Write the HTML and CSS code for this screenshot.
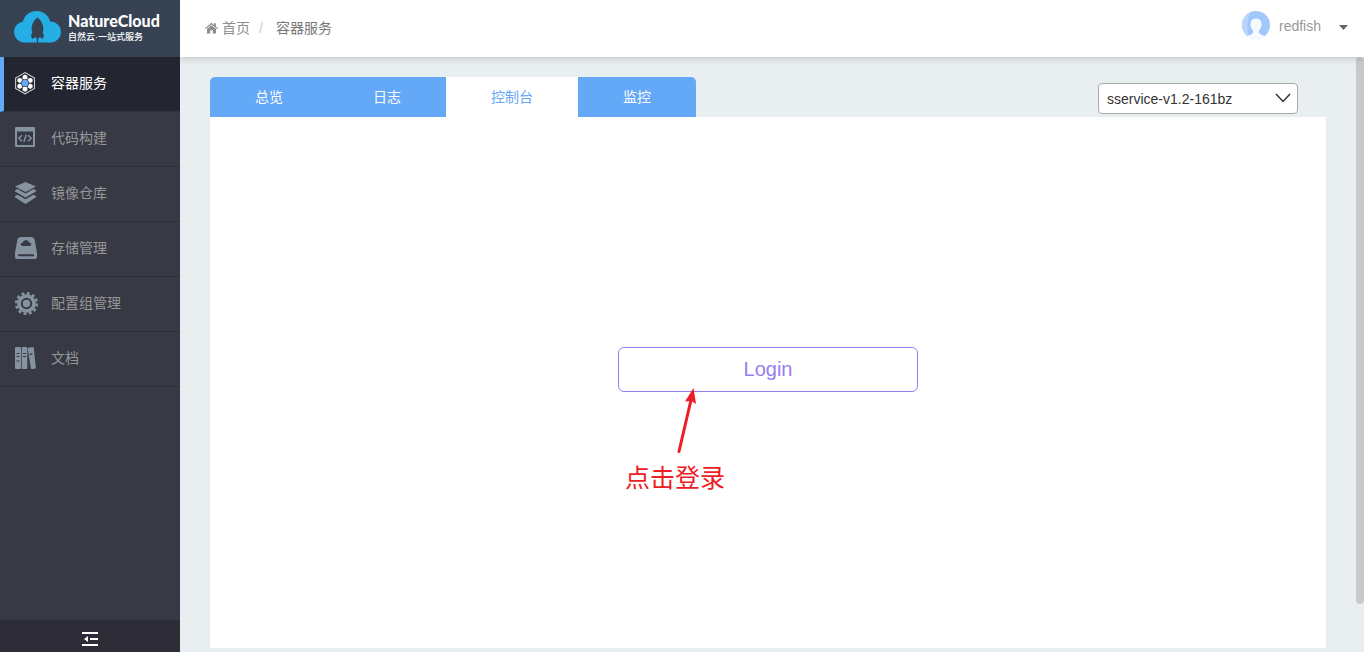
FILE: index.html
```html
<!DOCTYPE html>
<html lang="zh-CN">
<head>
<meta charset="utf-8">
<meta name="viewport" content="width=device-width, initial-scale=1">
<title>NatureCloud - 容器服务</title>
<link rel="stylesheet" href="styles.css">
</head>
<body>
<div class="app">
  <aside class="sidebar">
    <a class="brand" href="#">
      <svg class="brand-mark" width="48" height="32" viewBox="0 0 48 32" aria-hidden="true">
        <g fill="#25aee6">
          <circle cx="22.500" cy="14" r="14"/>
          <circle cx="10.500" cy="21" r="10.500"/>
          <circle cx="36.500" cy="21" r="10.500"/>
          <path d="M10.500 14h26v17.500h-26z"/>
        </g>
        <path fill="#364252" d="M23.500 6.500C28.500 10.500 30.500 16 28.800 21.500L30 24.500 28.800 28 25.800 26.300 24.400 27 24 32H23L22.600 27 21.200 26.300 18.200 28 17 24.500 18.200 21.500C16.500 16 18.500 10.500 23.500 6.500Z"/>
      </svg>
      <span class="brand-text">
        <span class="brand-name">NatureCloud</span>
        <span class="brand-sub">自然云·一站式服务</span>
      </span>
    </a>
    <nav class="menu">
      <a class="menu-item is-active" href="#">
        <svg class="icon" width="24" height="24" viewBox="0 0 24 24" aria-hidden="true">
          <path fill="none" stroke="#c9ccd2" stroke-width="1.100" d="M10 1.600 19.500 7v10.400L10 22.800.6 17.400V7Z"/>
          <g fill="#fff">
            <path d="m10 3.600 2.400 1.300v3L10 9.200 7.600 7.900v-3z"/>
            <path d="m15.200 6.700 2.400 1.300v2.800l-2.400 1.300-2.400-1.300V8z"/>
            <path d="m15.200 12.500 2.400 1.300v2.800l-2.400 1.300-2.400-1.300v-2.800z"/>
            <path d="m10 15.200 2.400 1.300v3L10 20.800l-2.400-1.300v-3z"/>
            <path d="m4.800 12.500 2.400 1.300v2.800l-2.400 1.300-2.400-1.300v-2.800z"/>
            <path d="M4.800 6.700 7.200 8v2.800l-2.400 1.300-2.400-1.300V8z"/>
          </g>
          <circle cx="10" cy="12.200" r="3.900" fill="#232530"/>
          <circle cx="10" cy="12.200" r="3.400" fill="#64a8f8"/>
        </svg>
        <span>容器服务</span>
      </a>
      <a class="menu-item" href="#">
        <svg class="icon" width="24" height="24" viewBox="0 0 24 24" aria-hidden="true">
          <path fill="#8592a0" fill-rule="evenodd" d="M1 1h18q1 0 1 1v18q0 1-1 1H1q-1 0-1-1V2q0-1 1-1Zm1 4.500V19h16V5.500Z"/>
          <path fill="none" stroke="#8592a0" stroke-width="1.500" d="M7 9.300 3.800 12.300 7 15.300M13 9.300l3.200 3-3.200 3M11.300 8.800 8.800 15.800"/>
        </svg>
        <span>代码构建</span>
      </a>
      <a class="menu-item" href="#">
        <svg class="icon" width="24" height="24" viewBox="0 0 24 24" aria-hidden="true">
          <g fill="#8592a0">
            <path d="M10.500 1 21 5.500 10.500 11 0 5.500z"/>
            <path d="m0 9.300 2.500-1.200 8 4.300 8-4.300L21 9.300v1.200L10.500 16.500 0 10.500z"/>
            <path d="m0 15 2.500-1.200 8 4.400 8-4.400L21 15v1.200L10.500 23 0 16.200z"/>
          </g>
        </svg>
        <span>镜像仓库</span>
      </a>
      <a class="menu-item" href="#">
        <svg class="icon" width="24" height="24" viewBox="0 0 24 24" aria-hidden="true">
          <path fill="#8592a0" fill-rule="evenodd" d="M6 1h10q3 0 3.700 3L22 17v4q0 2-2 2H2q-2 0-2-2v-4L2.300 4Q3 1 6 1Zm1.500 9h7q2.300-.3 1.800-2-.5-1.200-2-1.500Q13.300 4 11 4T7.700 6.500Q6 6.800 5.700 8 5.500 9.700 7.500 10ZM4 18.300q-1.200 0-1.200 1t1.200 1h14q1.200 0 1.200-1t-1.200-1Z"/>
        </svg>
        <span>存储管理</span>
      </a>
      <a class="menu-item" href="#">
        <svg class="icon" width="24" height="24" viewBox="0 0 24 24" aria-hidden="true">
          <circle cx="11.500" cy="12.500" r="10.200" fill="none" stroke="#8592a0" stroke-width="2.800" stroke-dasharray="2.900 2.441"/>
          <circle cx="11.500" cy="12.500" r="7.500" fill="none" stroke="#8592a0" stroke-width="3.600"/>
          <circle cx="11.500" cy="12.500" r="3.700" fill="#8592a0"/>
        </svg>
        <span>配置组管理</span>
      </a>
      <a class="menu-item" href="#">
        <svg class="icon" width="24" height="24" viewBox="0 0 24 24" aria-hidden="true">
          <g fill="#8592a0">
            <rect x="0" y="1" width="6" height="22" rx="1"/>
            <rect x="6.700" y="1" width="5.600" height="22" rx="1"/>
            <path d="m13.500 1.800 4.200-.7q.9 0 1.100.8l2 19.800q0 .9-.9 1l-3 .4q-.9 0-1-.9l-3.200-19.400q0-.8.800-1Z"/>
          </g>
          <path stroke="#373945" stroke-width="1.200" d="M1.500 7.500h3M1.500 10.500h3M1.500 15h3M8 7.500h3M8 10.500h3M14.500 8.300l3-.4"/>
        </svg>
        <span>文档</span>
      </a>
    </nav>
    <button class="collapse" type="button" aria-label="收起菜单">
      <svg width="16" height="14" viewBox="0 0 16 14" aria-hidden="true">
        <path fill="#fff" d="M0 0h16v2H0zM8 6h8v2H8zM0 12h16v2H0zM2 7l4-3v6z"/>
      </svg>
    </button>
  </aside>

  <div class="page">
    <header class="topbar">
      <nav class="crumbs">
        <a class="crumb-home" href="#">
          <svg width="13" height="12" viewBox="0 0 13 12" aria-hidden="true">
            <path fill="#8d8d8d" d="M6.500.8 9 2.900V1.200h1.900v3.300L13 6.200l-.8.900L6.500 2.400.8 7.100 0 6.200ZM6.500 3.300 11 7v4.500H7.700V8.300H5.300v3.200H2V7Z"/>
          </svg>
          首页
        </a>
        <span class="crumb-sep">/</span>
        <span class="crumb-current">容器服务</span>
      </nav>
      <button class="user" type="button">
        <svg width="28" height="28" viewBox="0 0 28 28" aria-hidden="true">
          <clipPath id="avatar"><circle cx="14" cy="14" r="14"/></clipPath>
          <g clip-path="url(#avatar)">
            <path fill="#a1c7fb" d="M0 0h28v28H0z"/>
            <path fill="#b9d7fd" d="M0 0h9Q3 10 7 28H0z"/>
            <path fill="#f6faff" d="M14 7.500q5.500 0 5.500 6 0 4-2.500 6v2.500q1 1.500 7 3.500V28H4v-2.500q6-2 7-3.500v-2.500q-2.500-2-2.500-6 0-6 5.500-6Z"/>
          </g>
        </svg>
        <span class="user-name">redfish</span>
        <svg class="user-caret" width="9" height="5" viewBox="0 0 9 5" aria-hidden="true"><path fill="#666" d="M0 0h9L4.500 5z"/></svg>
      </button>
    </header>

    <main class="content">
      <section class="workspace">
        <div class="tools">
          <div class="tabs" role="tablist">
            <button class="tab" type="button" role="tab">总览</button>
            <button class="tab" type="button" role="tab">日志</button>
            <button class="tab is-active" type="button" role="tab" aria-selected="true">控制台</button>
            <button class="tab" type="button" role="tab">监控</button>
          </div>
          <div class="picker">
            <select class="picker-select" aria-label="容器实例">
              <option>sservice-v1.2-161bz</option>
            </select>
            <svg class="picker-arrow" width="16" height="10" viewBox="0 0 16 10" aria-hidden="true"><path fill="none" stroke="#333" stroke-width="1.500" d="m1 1 7 7.500L15 1"/></svg>
          </div>
        </div>
        <div class="panel">
          <div class="login-area">
            <button class="login" type="button">Login</button>
            <div class="hint">
              <svg class="hint-arrow" width="24" height="66" viewBox="0 0 24 66" aria-hidden="true">
                <path fill="none" stroke="#ee1c24" stroke-width="3" stroke-linecap="round" d="M4 63.500 16 12"/>
                <path fill="#ee1c24" d="m18.500 0 2.500 16-4.500-3-6.500.6z"/>
              </svg>
              <span class="hint-text">点击登录</span>
            </div>
          </div>
        </div>
      </section>
      <div class="scroll-track"><div class="scroll-thumb"></div></div>
    </main>
  </div>
</div>
</body>
</html>
```
FILE: styles.css
```css
* {
  box-sizing: border-box;
}

body {
  margin: 0;
  font-family: "Liberation Sans", "Noto Sans CJK SC", sans-serif;
  font-size: 14px;
  line-height: 20px;
  color: #666;
}

a {
  color: inherit;
  text-decoration: none;
}

button,
select {
  font: inherit;
}

button {
  padding: 0;
  border: 0;
  background: none;
  cursor: pointer;
}

svg {
  display: block;
  flex: none;
}

.app {
  display: flex;
  min-height: 100vh;
}

/* Sidebar */
.sidebar {
  position: relative;
  z-index: 2;
  display: flex;
  flex-direction: column;
  flex: none;
  width: 180px;
  background: #373945;
}

.brand {
  display: flex;
  align-items: center;
  gap: 6px;
  height: 57px;
  padding: 0 0 4px 14px;
  background: #364252;
  color: #fff;
}

.brand-text {
  display: flex;
  flex-direction: column;
  padding-top: 2px;
}

.brand-name {
  font: 900 16px/18px Lato, sans-serif;
}

.brand-sub {
  font-size: 9px;
  font-weight: 500;
  line-height: 14px;
  white-space: nowrap;
}

.menu {
  flex: 1;
}

.menu-item {
  display: flex;
  align-items: center;
  gap: 12px;
  height: 55px;
  padding: 0 0 2px 15px;
  border-bottom: 1px solid #2f3036;
  color: #979797;
}

.menu-item.is-active {
  padding-left: 11px;
  border-bottom-color: #30323d;
  border-left: 4px solid #64a8f8;
  background: #232530;
  color: #fff;
}

.collapse {
  display: flex;
  align-items: center;
  justify-content: center;
  height: 32px;
  padding-top: 6px;
  background: #2d2c37;
}

/* Header */
.page {
  display: flex;
  flex: 1;
  flex-direction: column;
  min-width: 0;
}

.topbar {
  display: flex;
  align-items: center;
  justify-content: space-between;
  height: 57px;
  padding: 0 16px 2px 25px;
  background: #fff;
  box-shadow: 0 1px 8px rgba(0, 0, 0, 0.2);
  z-index: 1;
}

.crumbs,
.crumb-home,
.user {
  display: flex;
  align-items: center;
}

.crumb-home {
  gap: 4px;
  color: #8d8d8d;
}

.crumb-sep {
  padding: 0 13px 0 9px;
  color: #ccc;
}

.crumb-current {
  color: #777;
}

.user {
  padding-bottom: 5px;
  color: #999;
}

.user-name {
  padding: 2px 18px 0 9px;
}

.user-caret {
  margin-top: 4px;
}

/* Content */
.content {
  display: flex;
  flex: 1;
  background: #e9eef1;
}

.workspace {
  display: flex;
  flex: 1;
  flex-direction: column;
  min-width: 0;
  padding: 20px 30px 4px;
}

.tools {
  display: flex;
  justify-content: space-between;
  padding-right: 28px;
}

.tabs {
  display: flex;
  height: 40px;
  border-radius: 5px 5px 0 0;
  overflow: hidden;
}

.tab {
  padding: 0 45px;
  background: #64a8f8;
  color: #fff;
  white-space: nowrap;
}

.tab.is-active {
  background: #fff;
  color: #64a8f8;
}

.picker {
  position: relative;
  align-self: flex-end;
  width: 200px;
  padding-bottom: 3px;
}

.picker-select {
  display: block;
  width: 100%;
  height: 31px;
  padding: 0 32px 0 8px;
  border: 1px solid #aaa;
  border-radius: 4px;
  appearance: none;
  background: #fff;
  color: #333;
}

.picker-arrow {
  position: absolute;
  top: 10px;
  right: 7px;
  pointer-events: none;
}

.panel {
  display: flex;
  flex: 1;
  justify-content: center;
  padding: 230px 20px 20px;
  background: #fff;
}

.login-area {
  position: relative;
  width: 300px;
}

.login {
  width: 100%;
  height: 45px;
  padding-bottom: 2px;
  border: 1px solid #967ef0;
  border-radius: 6px;
  background: #fff;
  color: #967ef0;
  font-size: 20px;
}

.hint {
  position: absolute;
  top: 41px;
  left: 7px;
  color: #ee1c24;
}

.hint-arrow {
  margin-left: 50px;
}

.hint-text {
  display: block;
  font-size: 25px;
  line-height: 48px;
  white-space: nowrap;
}

.scroll-track {
  width: 8px;
}

.scroll-thumb {
  height: 92%;
  border-radius: 4px;
  background: #c9c9c9;
}
```
